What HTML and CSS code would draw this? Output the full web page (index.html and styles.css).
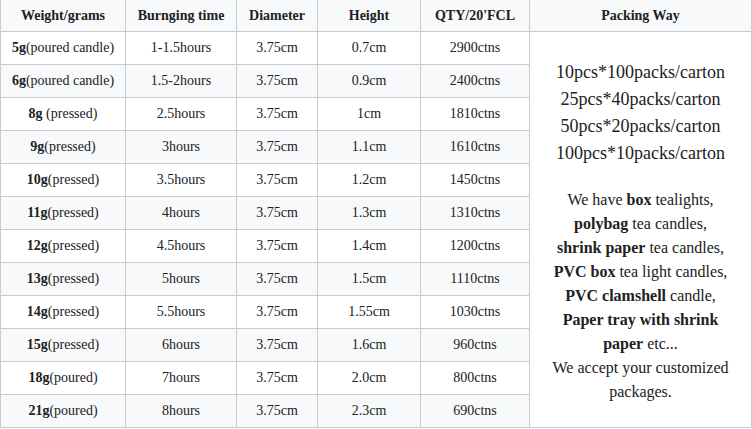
FILE: index.html
```html
<!DOCTYPE html>
<html>
<head>
<meta charset="utf-8">
<link rel="stylesheet" href="styles.css">
</head>
<body>
<table class="spec">
  <colgroup>
    <col class="c1"><col class="c2"><col class="c3"><col class="c4"><col class="c5"><col class="c6">
  </colgroup>
  <thead>
    <tr>
      <th>Weight/grams</th>
      <th>Burnging time</th>
      <th>Diameter</th>
      <th>Height</th>
      <th>QTY/20'FCL</th>
      <th>Packing Way</th>
    </tr>
  </thead>
  <tbody>
    <tr>
      <td><b>5g</b>(poured candle)</td><td>1-1.5hours</td><td>3.75cm</td><td>0.7cm</td><td>2900ctns</td>
      <td class="packing" rowspan="12">
        <div class="pack-list">10pcs*100packs/carton<br>25pcs*40packs/carton<br>50pcs*20packs/carton<br>100pcs*10packs/carton</div>
        <div class="pack-note">We have <b>box</b> tealights,<br><b>polybag</b> tea candles,<br><b>shrink paper</b> tea candles,<br><b>PVC box</b> tea light candles,<br><b>PVC clamshell</b> candle,<br><b>Paper tray with shrink paper</b> etc...<br>We accept your customized packages.</div>
      </td>
    </tr>
    <tr><td><b>6g</b>(poured candle)</td><td>1.5-2hours</td><td>3.75cm</td><td>0.9cm</td><td>2400ctns</td></tr>
    <tr><td><b>8g</b> (pressed)</td><td>2.5hours</td><td>3.75cm</td><td>1cm</td><td>1810ctns</td></tr>
    <tr><td><b>9g</b>(pressed)</td><td>3hours</td><td>3.75cm</td><td>1.1cm</td><td>1610ctns</td></tr>
    <tr><td><b>10g</b>(pressed)</td><td>3.5hours</td><td>3.75cm</td><td>1.2cm</td><td>1450ctns</td></tr>
    <tr><td><b>11g</b>(pressed)</td><td>4hours</td><td>3.75cm</td><td>1.3cm</td><td>1310ctns</td></tr>
    <tr><td><b>12g</b>(pressed)</td><td>4.5hours</td><td>3.75cm</td><td>1.4cm</td><td>1200ctns</td></tr>
    <tr><td><b>13g</b>(pressed)</td><td>5hours</td><td>3.75cm</td><td>1.5cm</td><td>1110ctns</td></tr>
    <tr><td><b>14g</b>(pressed)</td><td>5.5hours</td><td>3.75cm</td><td>1.55cm</td><td>1030ctns</td></tr>
    <tr><td><b>15g</b>(pressed)</td><td>6hours</td><td>3.75cm</td><td>1.6cm</td><td>960ctns</td></tr>
    <tr><td><b>18g</b>(poured)</td><td>7hours</td><td>3.75cm</td><td>2.0cm</td><td>800ctns</td></tr>
    <tr><td><b>21g</b>(poured)</td><td>8hours</td><td>3.75cm</td><td>2.3cm</td><td>690ctns</td></tr>
  </tbody>
</table>
</body>
</html>
```
FILE: styles.css
```css
html, body {
  margin: 0;
  padding: 0;
  background: #ffffff;
}
body {
  font-family: "Liberation Serif", "Times New Roman", serif;
  color: #202122;
}
.spec {
  border-collapse: collapse;
  table-layout: fixed;
  width: 751px;
  font-size: 14px;
}
.c1 { width: 125px; }
.c2 { width: 111px; }
.c3 { width: 81px; }
.c4 { width: 103px; }
.c5 { width: 109px; }
.c6 { width: 222px; }
.spec th,
.spec td {
  border: 1px solid #c8ccd1;
  text-align: center;
  vertical-align: middle;
  padding: 0 4px;
  line-height: 16px;
}
.spec th {
  border-top: 0;
  background: #f8f9fa;
  height: 31px;
  font-weight: bold;
}
.spec td {
  height: 32px;
}
.spec tbody tr:nth-child(even) td {
  background: #f8f9fa;
}
.spec td.packing {
  background: #ffffff;
  padding: 4px 14px 0;
}
.pack-list {
  font-size: 18px;
  line-height: 27px;
}
.pack-note {
  font-size: 16px;
  line-height: 24px;
  margin-top: 21px;
}
```
